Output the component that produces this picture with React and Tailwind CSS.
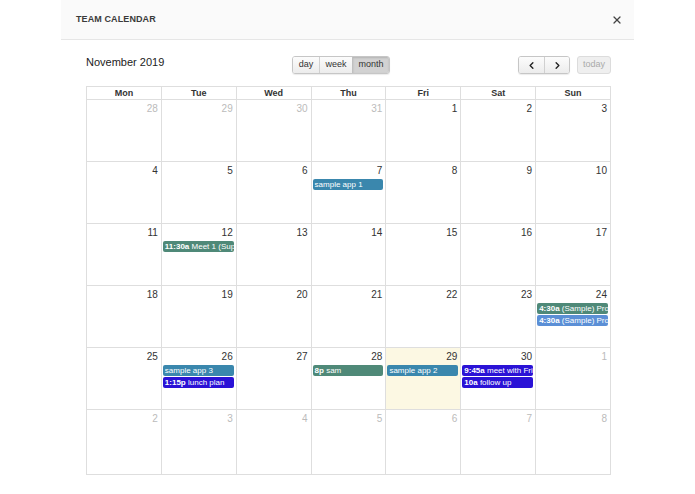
import { X, ChevronLeft, ChevronRight } from 'lucide-react'

const days = ['Mon', 'Tue', 'Wed', 'Thu', 'Fri', 'Sat', 'Sun']

const weeks = [
  [28, 29, 30, 31, 1, 2, 3],
  [4, 5, 6, 7, 8, 9, 10],
  [11, 12, 13, 14, 15, 16, 17],
  [18, 19, 20, 21, 22, 23, 24],
  [25, 26, 27, 28, 29, 30, 1],
  [2, 3, 4, 5, 6, 7, 8],
]

const events = {
  '1-3': [{ title: 'sample app 1', color: 'bg-[#3a87ad]' }],
  '2-1': [{ time: '11:30a', title: 'Meet 1 (Supervisor)', color: 'bg-[#4f8978]' }],
  '3-6': [
    { time: '4:30a', title: '(Sample) Project', color: 'bg-[#4f8978]' },
    { time: '4:30a', title: '(Sample) Project', color: 'bg-[#5b8fd6]' },
  ],
  '4-1': [
    { title: 'sample app 3', color: 'bg-[#3a87ad]' },
    { time: '1:15p', title: 'lunch plan', color: 'bg-[#2a12d6]' },
  ],
  '4-3': [{ time: '8p', title: 'sam', color: 'bg-[#4f8978]' }],
  '4-4': [{ title: 'sample app 2', color: 'bg-[#3a87ad]' }],
  '4-5': [
    { time: '9:45a', title: 'meet with Friends', color: 'bg-[#2a12d6]' },
    { time: '10a', title: 'follow up', color: 'bg-[#2a12d6]' },
  ],
}

const rowHeights = ['h-[62px]', 'h-[62px]', 'h-[62px]', 'h-[62px]', 'h-[62px]', 'h-[65px]']

function isOther(w, d) {
  return (w === 0 && d < 4) || (w === 4 && d === 6) || w === 5
}

export default function App() {
  return (
    <div className="min-h-[494px] bg-white font-['Liberation_Sans',Arial,sans-serif] text-[#333]">
      <div className="mx-auto w-[573px] bg-white">
        <div className="flex h-[40px] items-center justify-between border-b border-[#e6e6e6] bg-[#fafafa] pl-[15px] pr-[11px]">
          <span className="text-[9px] font-bold tracking-[0.1px] text-[#3a3a3a]">TEAM CALENDAR</span>
          <X size={12} strokeWidth={2.5} className="text-[#444]" />
        </div>

        <div className="pl-[25px] pr-[23px] pt-[16px]">
          <div className="flex h-[18px] items-center">
            <h2 className="w-[206px] pb-[6px] text-[11px] font-medium text-[#222]">November 2019</h2>
            <div className="flex h-[18px] overflow-hidden rounded-[3px] border border-[#c6c6c6] text-[9px] text-[#333] shadow-[0_1px_1px_rgba(0,0,0,0.08)]">
              <button className="w-[26px] bg-gradient-to-b from-[#fcfcfc] to-[#ececec]">day</button>
              <button className="w-[33px] border-l border-[#d0d0d0] bg-gradient-to-b from-[#fcfcfc] to-[#ececec]">week</button>
              <button className="w-[37px] border-l border-[#c0c0c0] bg-[#d2d2d2] shadow-[inset_0_1px_2px_rgba(0,0,0,0.15)]">month</button>
            </div>
            <div className="flex-1" />
            <div className="flex items-center gap-[7px]">
              <div className="flex h-[18px] overflow-hidden rounded-[3px] border border-[#c6c6c6] shadow-[0_1px_1px_rgba(0,0,0,0.08)]">
                <button className="flex w-[25px] items-center justify-center bg-gradient-to-b from-[#fcfcfc] to-[#ececec]">
                  <ChevronLeft size={11} strokeWidth={3} className="text-[#222]" />
                </button>
                <button className="flex w-[25px] items-center justify-center border-l border-[#d0d0d0] bg-gradient-to-b from-[#fcfcfc] to-[#ececec]">
                  <ChevronRight size={11} strokeWidth={3} className="text-[#222]" />
                </button>
              </div>
              <button className="h-[18px] w-[34px] rounded-[3px] border border-[#dcdcdc] bg-[#efefef] text-[9px] text-[#aaa]">today</button>
            </div>
          </div>

          <div className="mt-[12px] w-[525px] border-l border-t border-[#dedede]">
            <div className="grid h-[13px] grid-cols-7">
              {days.map((d) => (
                <div key={d} className="flex items-center justify-center border-b border-r border-[#dedede] text-[9px] font-bold leading-none text-[#333]">
                  {d}
                </div>
              ))}
            </div>
            {weeks.map((week, w) => (
              <div key={w} className={`grid grid-cols-7 ${rowHeights[w]}`}>
                {week.map((n, d) => {
                  const evs = events[`${w}-${d}`] || []
                  const today = w === 4 && d === 4
                  return (
                    <div
                      key={d}
                      className={`border-b border-r border-[#dedede] ${today ? 'bg-[#fcf8e3]' : ''}`}
                    >
                      <div className={`pr-[3px] pt-[2px] text-right text-[10px] leading-[13px] ${isOther(w, d) ? 'text-[#bbb]' : 'text-[#333]'}`}>
                        {n}
                      </div>
                      <div className="mt-[2px] flex flex-col gap-[1px] pl-[1px] pr-[2px]">
                        {evs.map((e, i) => (
                          <div
                            key={i}
                            className={`h-[11px] overflow-hidden whitespace-nowrap rounded-[2px] px-[2px] text-[8px] leading-[11px] text-white ${e.color}`}
                          >
                            {e.time && <span className="font-bold">{e.time} </span>}
                            {e.title}
                          </div>
                        ))}
                      </div>
                    </div>
                  )
                })}
              </div>
            ))}
          </div>
        </div>
      </div>
    </div>
  )
}
